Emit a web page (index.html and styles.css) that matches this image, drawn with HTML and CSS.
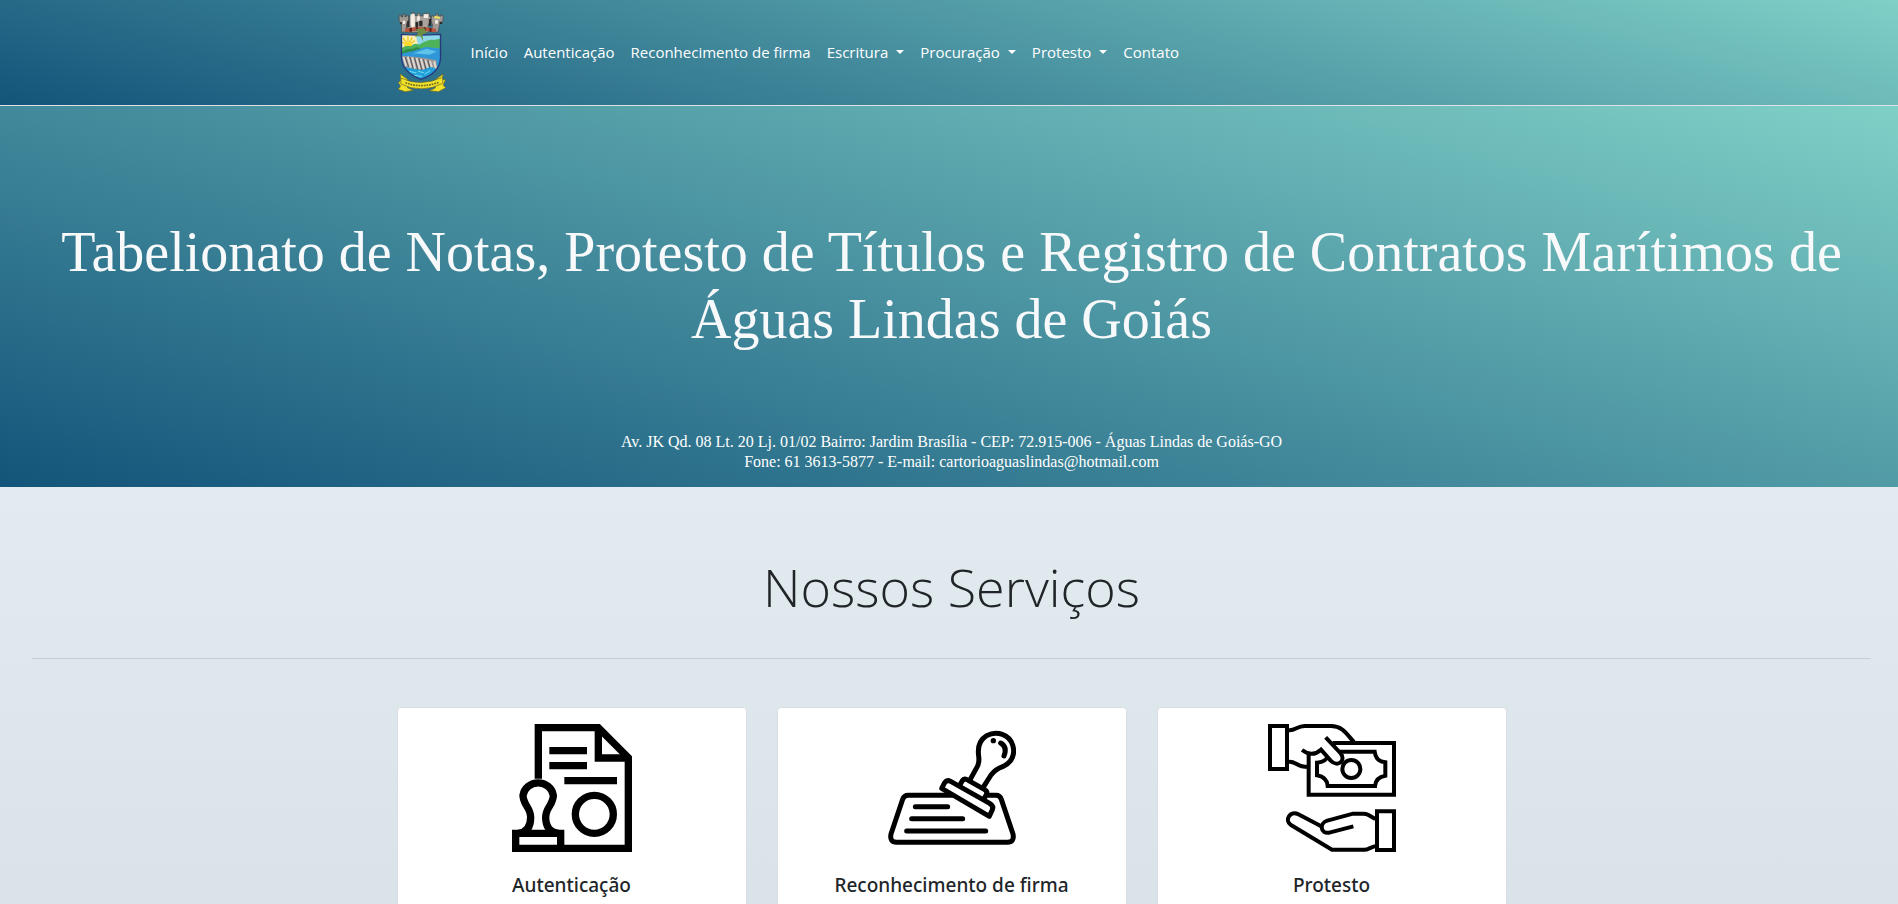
FILE: index.html
```html
<!DOCTYPE html>
<html lang="pt-br">
<head>
<meta charset="utf-8">
<meta name="viewport" content="width=device-width, initial-scale=1">
<title>Tabelionato de Notas - Águas Lindas de Goiás</title>
<link rel="stylesheet" href="styles.css">
</head>
<body>
<div class="page">
  <header class="navbar">
    <div class="container navbar-inner">
      <a class="brand" href="#" aria-label="Página inicial">
        <svg class="crest" viewBox="54 36 147 243" aria-hidden="true">
          <g stroke="#4a4644" stroke-width="2">
            <path d="M66 96V74L59 64V46H65V51H70V42H76V50H81V46H87V64L81 72V96Z" fill="#a29b95"/>
            <path d="M156 96L159 74L155 64L156 47H162V51H169V42H176V49H183V45L191 47L190 65L180 74L176 96Z" fill="#a29b95"/>
            <path d="M83 97V70L90 62V48H96V38H106V47H113V40H122V48H130V42H137V40H150V50H153V64L146 75V97Z" fill="#aaa39c"/>
          </g>
          <g fill="#f4eee6">
            <path d="M93 43H106V78L99 84L94 76ZM133 43H146V54H133ZM70 62H77V72H70ZM167 60H175V71H167ZM113 49H121V62H113Z"/>
            <path d="M165 47L182 50L180 57L163 54Z" fill="#e8de66"/>
          </g>
          <g fill="#2b2928">
            <path d="M83 62H90V82H83ZM108 66H116V82H108ZM119 62H129V79H119ZM148 57H155V78H148ZM62 66H67V73H62ZM180 65H188V72H180Z"/>
          </g>
          <path d="M76 86Q122 76 170 86L168 97Q122 88 77 97Z" fill="#b9553f"/>
          <path d="M90 84H97V95H90ZM109 82H115V92H109ZM132 82H138V92H132ZM150 84H156V95H150Z" fill="#5a1913"/>
          <clipPath id="shield"><path d="M66 103Q96 105 121 105Q148 105 183 103V174Q181 219 124 238Q69 217 66 174Z"/></clipPath>
          <g clip-path="url(#shield)">
            <path fill="#8ed8ea" d="M60 88H190V245H60Z"/>
            <path fill="#f8efb0" d="M60 100L108 100L116 137L64 145Z"/>
            <path d="M86 136L68 126M86 136L71 114M86 136L85 109M86 136L98 112M86 136L106 122" stroke="#f4c922" stroke-width="4"/>
            <circle cx="86" cy="136" r="11" fill="#ffda27"/>
            <path fill="#4db25a" d="M62 148Q78 133 94 139Q103 127 119 134Q146 117 165 120Q180 115 188 118V157L146 146Q111 143 62 160Z"/>
            <path fill="#2f8c49" d="M67 156Q84 144 99 147Q112 136 126 147L106 158L65 164Z"/>
            <path fill="#2f97d8" d="M62 162Q101 155 139 141L187 146V190L62 187Z"/>
            <path fill="#5fc2e8" d="M101 160L142 146L172 155L149 164Z"/>
            <path fill="#219fd8" d="M62 187H187V244H62Z"/>
            <path fill="#9b9693" d="M67 168Q115 169 171 181L173 207L150 199L128 210L75 201Z"/>
            <path d="M72 171L80 198M85 170L94 203M98 172L107 206M111 174L121 208M124 176L133 208M137 179L145 204M151 182L157 202M164 184L169 205" stroke="#ddd7d0" stroke-width="6"/>
            <path d="M77 171L87 200M91 171L101 206M105 173L115 209M118 175L127 210M132 178L139 208M145 181L151 203" stroke="#56535a" stroke-width="3"/>
            <path d="M90 214L111 219M116 214L133 218M135 223L152 212M104 226L128 229" stroke="#7bddf2" stroke-width="3"/>
          </g>
          <path d="M66 103Q96 105 121 105Q148 105 183 103V174Q181 219 124 238Q69 217 66 174Z" fill="none" stroke="#26377d" stroke-width="4"/>
          <path d="M108 88L134 84L142 98L128 104L132 124L122 108L106 110L117 99Z" fill="#6f8d45"/>
          <g fill="#f0e22a" stroke="#6b6424" stroke-width="2">
            <path d="M62 222L84 238L84 263L102 271L77 275L56 268L63 259L57 248L64 241Z"/>
            <path d="M191 222L169 238L167 264L149 272L177 275L199 263L191 256L198 239L188 239Z"/>
            <path d="M64 234Q123 262 189 232L190 250Q126 282 64 252Z"/>
          </g>
          <path d="M78 248Q123 266 178 247" fill="none" stroke="#6b6422" stroke-width="5" stroke-dasharray="5 3"/>
        </svg>
      </a>
      <nav>
        <ul class="nav-list">
          <li><a class="nav-link" href="#">Início</a></li>
          <li><a class="nav-link" href="#">Autenticação</a></li>
          <li><a class="nav-link" href="#">Reconhecimento de firma</a></li>
          <li><a class="nav-link dropdown" href="#">Escritura</a></li>
          <li><a class="nav-link dropdown" href="#">Procuração</a></li>
          <li><a class="nav-link dropdown" href="#">Protesto</a></li>
          <li><a class="nav-link" href="#">Contato</a></li>
        </ul>
      </nav>
    </div>
  </header>

  <section class="hero">
    <h1 class="hero-title">Tabelionato de Notas, Protesto de Títulos e Registro de Contratos Marítimos de Águas Lindas de Goiás</h1>
    <address class="hero-address">Av. JK Qd. 08 Lt. 20 Lj. 01/02 Bairro: Jardim Brasília - CEP: 72.915-006 - Águas Lindas de Goiás-GO<br>Fone: 61 3613-5877 - E-mail: cartorioaguaslindas@hotmail.com</address>
  </section>

  <main class="services">
    <h2 class="services-title">Nossos Serviços</h2>
    <hr class="divider">
    <div class="container cards">
      <article class="card">
        <svg class="card-icon" viewBox="54 72 384 384" aria-hidden="true">
          <g fill="none" stroke="#000" stroke-width="22">
            <path d="M145 236V83H325L415 173V445H212"/>
            <path d="M325 83V174H415"/>
            <path d="M178 152H291M178 197H291M223 242H381"/>
            <circle cx="313" cy="343" r="57"/>
            <path d="M77 400H212V445H77Z"/>
            <path d="M84 400C112 398 122 378 122 352C122 322 99 315 99 286A46 44 0 0 1 190 286C190 315 167 322 167 352C167 378 178 398 206 400"/>
          </g>
        </svg>
        <h3 class="card-title">Autenticação</h3>
      </article>
      <article class="card">
        <svg class="card-icon" viewBox="54 72 384 384" aria-hidden="true">
          <g fill="none" stroke="#000" stroke-width="15" stroke-linecap="round" stroke-linejoin="round">
            <path d="M248 286H115Q102 286 98 298L63 402Q58 426 80 427H412Q434 426 429 402L394 298Q390 286 378 286H354"/>
            <path d="M136 320H233M125 356H278M110 393H347"/>
            <path d="M215 265L224 248Q231 238 242 244L359 310Q372 318 367 329L358 349Z"/>
            <path d="M270 254L277 242Q282 234 291 239L344 269Q354 275 349 284L342 296"/>
            <path d="M302 236L319 205Q329 191 326 168C322 139 330 119 350 107C381 90 418 104 428 135C437 165 424 189 398 200Q376 208 363 225L341 260"/>
            <path d="M392 129Q413 141 402 168"/>
          </g>
          <circle cx="370" cy="122" r="8"/>
        </svg>
        <h3 class="card-title">Reconhecimento de firma</h3>
      </article>
      <article class="card">
        <svg class="card-icon" viewBox="54 72 384 384" aria-hidden="true">
          <g fill="none" stroke="#000" stroke-width="12">
            <path d="M60 78H111V207H60Z"/>
            <path d="M117 91C137 92 141 78 164 78H243C280 78 291 105 312 126"/>
            <path d="M117 185C141 184 136 201 176 201"/>
            <path d="M248 129H432V284H176V158"/>
            <path d="M156 150Q187 173 213 149L242 182C264 204 290 181 271 159L227 112"/>
            <path d="M268 155H374Q377 185 406 187V227Q377 232 375 258H233Q231 231 201 226V188Q222 187 232 173"/>
            <circle cx="304" cy="207" r="27"/>
            <path d="M381 334H432V450H381Z"/>
            <path d="M376 357L354 344Q348 341 340 341H309L232 362C207 369 211 403 238 398L310 379"/>
            <path d="M218 381L145 343C121 330 101 361 123 375L246 449H343Q350 449 356 446L376 438"/>
          </g>
        </svg>
        <h3 class="card-title">Protesto</h3>
      </article>
    </div>
  </main>
</div>
</body>
</html>
```
FILE: styles.css
```css
* {
  box-sizing: border-box;
}

html {
  overflow: hidden;
}

body {
  margin: 0;
  color: #212529;
  font-family: "Segoe UI", "Open Sans", "Noto Sans", sans-serif;
  font-size: 16px;
  line-height: 24px;
}

/* The page runs slightly past the right edge of the window. */
.page {
  margin-right: -5px;
}

.container {
  width: 100%;
  max-width: 1140px;
  margin: 0 auto;
  padding: 0 15px;
}

.navbar,
.hero {
  background: linear-gradient(15deg, #13547a 0%, #80d0c7 100%);
}

.navbar {
  padding: 12px 0;
  border-bottom: 1px solid #dee2e6;
}

.navbar-inner {
  display: flex;
  align-items: center;
}

.brand,
.crest {
  display: block;
}

.brand {
  margin-right: 16px;
}

.crest {
  width: 50px;
  height: 81px;
}

.nav-list {
  display: flex;
  margin: 0;
  padding: 0 0 2px;
  list-style: none;
}

.nav-link {
  display: block;
  padding: 8px;
  color: #fff;
  font-size: 15px;
  text-decoration: none;
}

.dropdown::after {
  content: "";
  display: inline-block;
  margin-left: 8px;
  vertical-align: 4px;
  border: 4px solid transparent;
  border-top-color: #fff;
  border-bottom: 0;
}

.hero {
  padding: 113px 48px 15px;
  color: #f8f9fa;
  font-family: "Times New Roman", "Liberation Serif", serif;
  text-align: center;
}

.hero-title {
  margin: 0 0 79px;
  font-size: 56px;
  font-weight: 300;
  line-height: 67px;
}

.hero-address {
  color: #fff;
  font-size: 16px;
  font-style: normal;
  line-height: 20px;
}

.services {
  min-height: 900px;
  padding: 66px 32px;
  background: linear-gradient(to top, #cfd9df 0%, #e2ebf0 100%);
}

.services-title {
  margin: 0;
  font-size: 52px;
  font-weight: 300;
  line-height: 67px;
  text-align: center;
}

.divider {
  margin: 38px 0 48px;
  border: 0;
  border-top: 1px solid #c6ced6;
}

.cards {
  display: grid;
  grid-template-columns: repeat(3, 1fr);
  gap: 30px;
}

.card {
  min-height: 280px;
  padding: 16px;
  border: 1px solid #d9dee2;
  border-radius: 4px;
  background: #fff;
  text-align: center;
}

.card-icon {
  display: block;
  width: 128px;
  height: 128px;
  margin: 0 auto 21px;
}

.card-title {
  margin: 0;
  font-family: "Segoe UI", "Noto Sans", "Open Sans", sans-serif;
  font-size: 19px;
  font-weight: 500;
  line-height: 24px;
}
```
